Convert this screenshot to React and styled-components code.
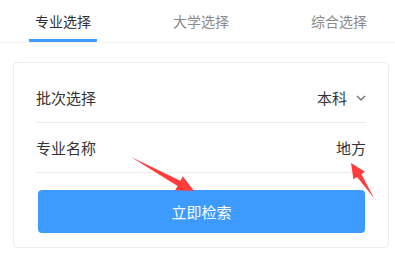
import styled, { createGlobalStyle } from 'styled-components';

const GlobalStyle = createGlobalStyle`
  html, body {
    margin: 0;
    padding: 0;
    background: #ffffff;
    font-family: "Noto Sans CJK SC", "Noto Sans", sans-serif;
  }
`;

const Page = styled.div`
  position: relative;
  width: 395px;
  height: 255px;
  overflow: hidden;
`;

const TabBar = styled.div`
  display: flex;
  gap: 70px;
  padding-left: 29px;
  height: 42px;
  border-bottom: 1px solid #f3f3f3;
`;

const Tab = styled.div`
  width: 68px;
  display: flex;
  align-items: center;
  justify-content: center;
  font-size: 14px;
  color: ${(p) => (p.$active ? '#333333' : '#8a8a8a')};
  border-bottom: 3px solid ${(p) => (p.$active ? '#3d9bff' : 'transparent')};
  border-radius: 1px;
  box-sizing: border-box;
  padding-top: 3px;
`;

const Card = styled.div`
  margin: 19px 6px 0 13px;
  border: 1px solid #ececec;
  border-radius: 4px;
  padding: 10px 22px 15px 22px;
  height: 186px;
  box-sizing: border-box;
`;

const Row = styled.div`
  display: flex;
  align-items: center;
  justify-content: space-between;
  height: 50px;
  border-bottom: 1px solid #ececec;
  box-sizing: border-box;
  font-size: 15px;
  color: #333333;
`;

const Value = styled.div`
  display: flex;
  align-items: center;
  gap: 9px;
  color: #333333;
`;

const SearchButton = styled.button`
  display: block;
  width: 327px;
  height: 43px;
  margin: 17px 0 0 2px;
  border: none;
  border-radius: 4px;
  background: #3d9bff;
  color: #ffffff;
  font-family: inherit;
  font-size: 15px;
`;

const Overlay = styled.svg`
  position: absolute;
  left: 0;
  top: 0;
  pointer-events: none;
`;

function Chevron() {
  return (
    <svg width="10" height="6" viewBox="0 0 10 6">
      <path d="M1 1 L5 5 L9 1" fill="none" stroke="#666" strokeWidth="1.2" />
    </svg>
  );
}

export default function App() {
  return (
    <Page>
      <GlobalStyle />
      <TabBar>
        <Tab $active>专业选择</Tab>
        <Tab>大学选择</Tab>
        <Tab>综合选择</Tab>
      </TabBar>
      <Card>
        <Row>
          <span>批次选择</span>
          <Value>
            本科
            <Chevron />
          </Value>
        </Row>
        <Row>
          <span>专业名称</span>
          <Value>地方</Value>
        </Row>
        <SearchButton>立即检索</SearchButton>
      </Card>
      <Overlay width="395" height="255" viewBox="0 0 395 255">
        <polygon
          fill="#ff3b3b"
          points="131,157 180.4,180.7 182.8,176.3 194,191 175.2,190.3 177.6,185.9"
        />
        <polygon
          fill="#ff3b3b"
          points="374,198 361.3,174.1 365,171.7 351,163 353.4,179.3 357.1,176.9"
        />
      </Overlay>
    </Page>
  );
}
